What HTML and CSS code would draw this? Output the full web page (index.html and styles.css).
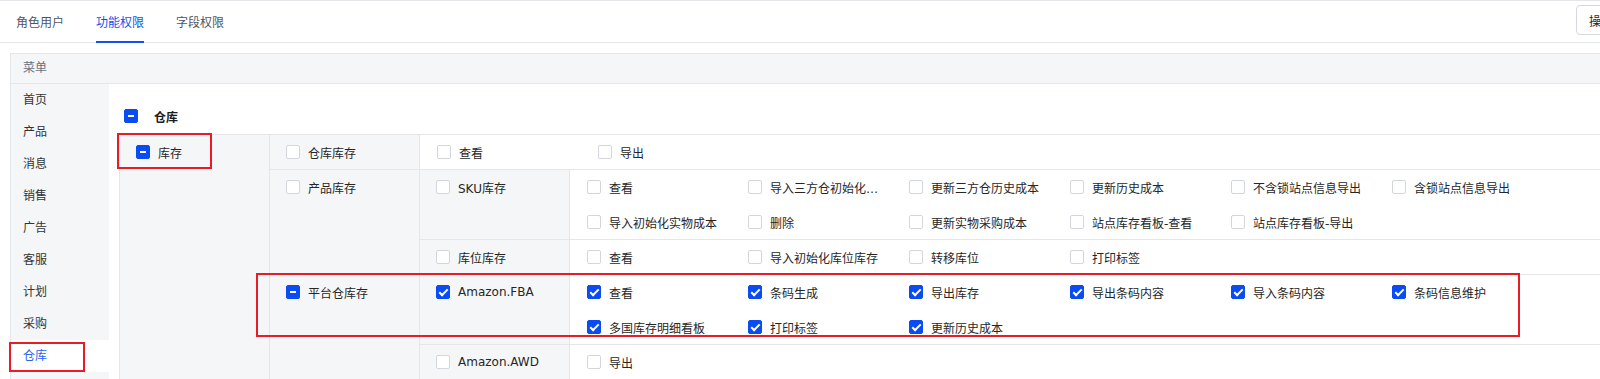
FILE: index.html
```html
<!DOCTYPE html>
<html lang="zh-CN">
<head>
    <meta charset="UTF-8">
    <title>功能权限</title>
    <link rel="stylesheet" href="styles.css">
</head>
<body>
    <div class="tabs">
        <div class="tab">角色用户</div>
        <div class="tab active">功能权限</div>
        <div class="tab">字段权限</div>
        <div class="tabs-right">
            <button class="btn">操作日志</button>
        </div>
    </div>

    <div class="panel">
        <div class="panel-head">菜单</div>
        <div class="panel-body">
            <ul class="menu">
                <li>首页</li>
                <li>产品</li>
                <li>消息</li>
                <li>销售</li>
                <li>广告</li>
                <li>客服</li>
                <li>计划</li>
                <li>采购</li>
                <li class="current">仓库<span class="mark mark-menu"></span></li>
            </ul>

            <div class="content">
                <div class="module">
                    <span class="cb half"></span>
                    <span class="module-name">仓库</span>
                </div>

                <div class="grid">
                    <div class="cell col first">
                        <div class="line"><span class="cb half"></span>库存</div>
                        <span class="mark mark-stock"></span>
                    </div>
                    <div class="groups">
                        <div class="group">
                            <div class="cell col">
                                <div class="line"><span class="cb"></span>仓库库存</div>
                            </div>
                            <div class="cell acts">
                                <label class="act"><span class="cb"></span><span class="txt">查看</span></label>
                                <label class="act"><span class="cb"></span><span class="txt">导出</span></label>
                            </div>
                        </div>

                        <div class="group">
                            <div class="cell col">
                                <div class="line"><span class="cb"></span>产品库存</div>
                            </div>
                            <div class="subs">
                                <div class="sub">
                                    <div class="cell col">
                                        <div class="line"><span class="cb"></span>SKU库存</div>
                                    </div>
                                    <div class="cell acts">
                                        <label class="act"><span class="cb"></span><span class="txt">查看</span></label>
                                        <label class="act"><span class="cb"></span><span class="txt">导入三方仓初始化成本</span></label>
                                        <label class="act"><span class="cb"></span><span class="txt">更新三方仓历史成本</span></label>
                                        <label class="act"><span class="cb"></span><span class="txt">更新历史成本</span></label>
                                        <label class="act"><span class="cb"></span><span class="txt">不含锁站点信息导出</span></label>
                                        <label class="act"><span class="cb"></span><span class="txt">含锁站点信息导出</span></label>
                                        <label class="act"><span class="cb"></span><span class="txt">导入初始化实物成本</span></label>
                                        <label class="act"><span class="cb"></span><span class="txt">删除</span></label>
                                        <label class="act"><span class="cb"></span><span class="txt">更新实物采购成本</span></label>
                                        <label class="act"><span class="cb"></span><span class="txt">站点库存看板-查看</span></label>
                                        <label class="act"><span class="cb"></span><span class="txt">站点库存看板-导出</span></label>
                                    </div>
                                </div>
                                <div class="sub">
                                    <div class="cell col">
                                        <div class="line"><span class="cb"></span>库位库存</div>
                                    </div>
                                    <div class="cell acts">
                                        <label class="act"><span class="cb"></span><span class="txt">查看</span></label>
                                        <label class="act"><span class="cb"></span><span class="txt">导入初始化库位库存</span></label>
                                        <label class="act"><span class="cb"></span><span class="txt">转移库位</span></label>
                                        <label class="act"><span class="cb"></span><span class="txt">打印标签</span></label>
                                    </div>
                                </div>
                            </div>
                        </div>

                        <div class="group">
                            <div class="cell col">
                                <div class="line"><span class="cb half"></span>平台仓库存</div>
                            </div>
                            <div class="subs">
                                <div class="sub">
                                    <div class="cell col">
                                        <div class="line"><span class="cb on"></span>Amazon.FBA</div>
                                    </div>
                                    <div class="cell acts">
                                        <label class="act"><span class="cb on"></span><span class="txt">查看</span></label>
                                        <label class="act"><span class="cb on"></span><span class="txt">条码生成</span></label>
                                        <label class="act"><span class="cb on"></span><span class="txt">导出库存</span></label>
                                        <label class="act"><span class="cb on"></span><span class="txt">导出条码内容</span></label>
                                        <label class="act"><span class="cb on"></span><span class="txt">导入条码内容</span></label>
                                        <label class="act"><span class="cb on"></span><span class="txt">条码信息维护</span></label>
                                        <label class="act"><span class="cb on"></span><span class="txt">多国库存明细看板</span></label>
                                        <label class="act"><span class="cb on"></span><span class="txt">打印标签</span></label>
                                        <label class="act"><span class="cb on"></span><span class="txt">更新历史成本</span></label>
                                    </div>
                                </div>
                                <div class="sub">
                                    <div class="cell col">
                                        <div class="line"><span class="cb"></span>Amazon.AWD</div>
                                    </div>
                                    <div class="cell acts">
                                        <label class="act"><span class="cb"></span><span class="txt">导出</span></label>
                                    </div>
                                </div>
                            </div>
                        </div>
                    </div>
                    <span class="mark mark-platform"></span>
                </div>
            </div>
        </div>
    </div>
</body>
</html>
```

FILE: styles.css
```css
html, body {
    height: 379px;
    overflow: hidden;
}
body {
    margin: 0;
    font-family: "DejaVu Sans", "Noto Sans CJK SC", sans-serif;
    font-size: 12px;
    color: #262626;
    background: #fff;
}

/* tabs */
.tabs {
    display: flex;
    align-items: stretch;
    height: 41px;
    border-top: 1px solid #e4e6ea;
    border-bottom: 1px solid #e4e6ea;
    padding-left: 16px;
    gap: 32px;
}
.tab {
    display: flex;
    align-items: center;
    padding-top: 1px;
    color: #4e5563;
    border-bottom: 2px solid transparent;
    margin-bottom: -1px;
}
.tab.active {
    color: #1250f0;
    border-bottom-color: #1250f0;
}
.tabs-right {
    margin-left: auto;
    display: flex;
    align-items: flex-start;
    padding-top: 4px;
    width: 24px;
    overflow: visible;
}
.btn {
    height: 30px;
    padding: 0 12px;
    border: 1px solid #d5d8de;
    border-radius: 4px;
    background: #fff;
    font: inherit;
    color: #262626;
    white-space: nowrap;
}

/* panel */
.panel {
    margin: 10px 0 0 10px;
    border-left: 1px solid #e4e6ea;
    border-top: 1px solid #e4e6ea;
}
.panel-head {
    height: 29px;
    line-height: 29px;
    padding-left: 12px;
    background: #f5f6f8;
    color: #6b7280;
    border-bottom: 1px solid #e4e6ea;
}
.panel-body {
    display: flex;
}
.menu {
    list-style: none;
    margin: 0;
    padding: 0;
    width: 98px;
    background: #f5f6f8;
    flex-shrink: 0;
}
.menu li {
    position: relative;
    height: 32px;
    line-height: 32px;
    padding-left: 12px;
    color: #333;
}
.menu li.current {
    background: #fff;
    color: #2a63f2;
}

.content {
    flex: 1;
    padding-left: 10px;
}
.module {
    display: flex;
    align-items: center;
    height: 14px;
    padding: 25px 4px 11px 5px;
}
.module-name {
    margin-left: 8px;
    font-weight: bold;
    color: #1d1d1d;
}

/* permission grid */
.grid {
    position: relative;
    display: flex;
    border-top: 1px solid #e4e6ea;
}
.cell {
    box-sizing: border-box;
    border-left: 1px solid #e4e6ea;
    padding: 8px 0 8px 16px;
}
.col {
    width: 150px;
    flex-shrink: 0;
    background: #f5f6f8;
}
.first {
    position: relative;
    height: 300px;
}
.line {
    display: flex;
    align-items: center;
    height: 18px;
    white-space: nowrap;
}
.groups {
    flex: 1;
}
.group {
    display: flex;
    border-bottom: 1px solid #e4e6ea;
}
.subs {
    flex: 1;
}
.sub {
    display: flex;
    border-bottom: 1px solid #e4e6ea;
}
.sub:last-child {
    border-bottom: none;
}
.acts {
    flex: 1;
    display: flex;
    flex-wrap: wrap;
    row-gap: 17px;
    padding-left: 17px;
    background: #fff;
}
.act {
    display: flex;
    align-items: center;
    width: 161px;
    height: 18px;
}
.txt {
    max-width: 116px;
    overflow: hidden;
    text-overflow: ellipsis;
    white-space: nowrap;
}

/* checkbox */
.cb {
    position: relative;
    box-sizing: border-box;
    width: 14px;
    height: 14px;
    margin-right: 8px;
    border: 1px solid #d3d6dc;
    border-radius: 2px;
    background: #fff;
    flex-shrink: 0;
}
.cb.half, .cb.on {
    border-color: #0b4cf2;
    background: #0b4cf2;
}
.cb.half::after {
    content: "";
    position: absolute;
    left: 3px;
    top: 5px;
    width: 6px;
    height: 2px;
    background: #fff;
}
.cb.on::after {
    content: "";
    position: absolute;
    left: 4px;
    top: 1px;
    width: 3px;
    height: 7px;
    border: solid #fff;
    border-width: 0 2px 2px 0;
    transform: rotate(45deg);
}

/* red annotation boxes */
.mark {
    position: absolute;
    border: 2px solid #e81c26;
    pointer-events: none;
}
.mark-menu {
    left: -2px;
    top: 2px;
    width: 72px;
    height: 26px;
}
.mark-stock {
    left: -3px;
    top: -2px;
    width: 91px;
    height: 32px;
}
.mark-platform {
    left: 137px;
    top: 138px;
    width: 1260px;
    height: 60px;
}
```
